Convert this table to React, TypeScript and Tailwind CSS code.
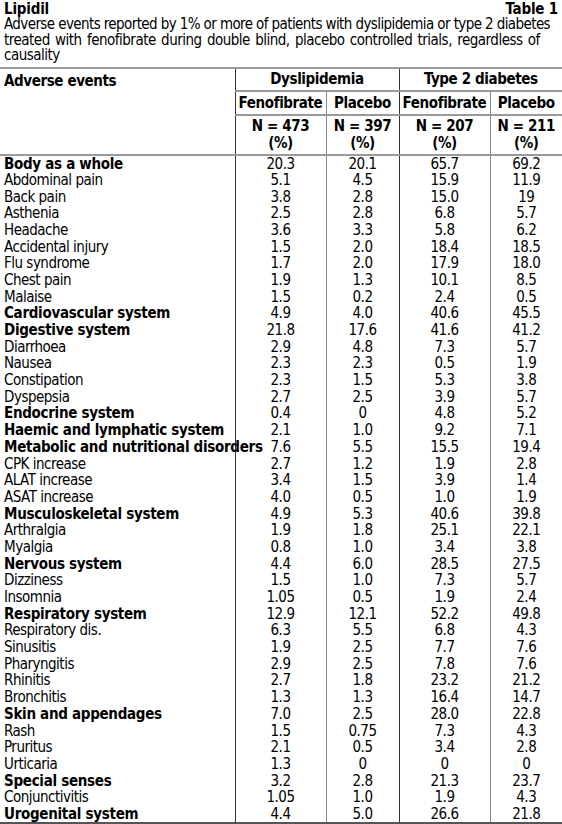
const rows: [string, string, string, string, string, boolean][] = [
  ["Body as a whole", "20.3", "20.1", "65.7", "69.2", true],
  ["Abdominal pain", "5.1", "4.5", "15.9", "11.9", false],
  ["Back pain", "3.8", "2.8", "15.0", "19", false],
  ["Asthenia", "2.5", "2.8", "6.8", "5.7", false],
  ["Headache", "3.6", "3.3", "5.8", "6.2", false],
  ["Accidental injury", "1.5", "2.0", "18.4", "18.5", false],
  ["Flu syndrome", "1.7", "2.0", "17.9", "18.0", false],
  ["Chest pain", "1.9", "1.3", "10.1", "8.5", false],
  ["Malaise", "1.5", "0.2", "2.4", "0.5", false],
  ["Cardiovascular system", "4.9", "4.0", "40.6", "45.5", true],
  ["Digestive system", "21.8", "17.6", "41.6", "41.2", true],
  ["Diarrhoea", "2.9", "4.8", "7.3", "5.7", false],
  ["Nausea", "2.3", "2.3", "0.5", "1.9", false],
  ["Constipation", "2.3", "1.5", "5.3", "3.8", false],
  ["Dyspepsia", "2.7", "2.5", "3.9", "5.7", false],
  ["Endocrine system", "0.4", "0", "4.8", "5.2", true],
  ["Haemic and lymphatic system", "2.1", "1.0", "9.2", "7.1", true],
  ["Metabolic and nutritional disorders", "7.6", "5.5", "15.5", "19.4", true],
  ["CPK increase", "2.7", "1.2", "1.9", "2.8", false],
  ["ALAT increase", "3.4", "1.5", "3.9", "1.4", false],
  ["ASAT increase", "4.0", "0.5", "1.0", "1.9", false],
  ["Musculoskeletal system", "4.9", "5.3", "40.6", "39.8", true],
  ["Arthralgia", "1.9", "1.8", "25.1", "22.1", false],
  ["Myalgia", "0.8", "1.0", "3.4", "3.8", false],
  ["Nervous system", "4.4", "6.0", "28.5", "27.5", true],
  ["Dizziness", "1.5", "1.0", "7.3", "5.7", false],
  ["Insomnia", "1.05", "0.5", "1.9", "2.4", false],
  ["Respiratory system", "12.9", "12.1", "52.2", "49.8", true],
  ["Respiratory dis.", "6.3", "5.5", "6.8", "4.3", false],
  ["Sinusitis", "1.9", "2.5", "7.7", "7.6", false],
  ["Pharyngitis", "2.9", "2.5", "7.8", "7.6", false],
  ["Rhinitis", "2.7", "1.8", "23.2", "21.2", false],
  ["Bronchitis", "1.3", "1.3", "16.4", "14.7", false],
  ["Skin and appendages", "7.0", "2.5", "28.0", "22.8", true],
  ["Rash", "1.5", "0.75", "7.3", "4.3", false],
  ["Pruritus", "2.1", "0.5", "3.4", "2.8", false],
  ["Urticaria", "1.3", "0", "0", "0", false],
  ["Special senses", "3.2", "2.8", "21.3", "23.7", true],
  ["Conjunctivitis", "1.05", "1.0", "1.9", "4.3", false],
  ["Urogenital system", "4.4", "5.0", "26.6", "21.8", true],
];

const font = {
  fontFamily: '"Liberation Sans Narrow", "DejaVu Sans Condensed", "Liberation Sans", sans-serif',
};

export default function App() {
  return (
    <div
      className="w-[562px] h-[824px] overflow-hidden bg-white text-black text-[15px] leading-[16px] tracking-[-0.5px]"
      style={font}
    >
      <div className="px-[4px] pt-[1px]">
        <div className="flex justify-between font-bold tracking-[-0.2px]">
          <span>Lipidil</span>
          <span>Table 1</span>
        </div>
        <p className="leading-[15.5px] whitespace-nowrap">
          <span className="tracking-[-0.6px]">
            Adverse events reported by 1% or more of patients with dyslipidemia or type 2 diabetes
          </span>
          <br />
          <span className="[word-spacing:1.5px]">
            treated with fenofibrate during double blind, placebo controlled trials, regardless of
          </span>
          <br />
          causality
        </p>
      </div>
      <table className="mt-[3px] w-[562px] table-fixed border-collapse">
        <colgroup>
          <col className="w-[235px]" />
          <col className="w-[91px]" />
          <col className="w-[73px]" />
          <col className="w-[91px]" />
          <col className="w-[72px]" />
        </colgroup>
        <thead className="font-bold tracking-[-0.4px]">
          <tr className="h-[23px] border-t-2 border-[#9a9a9a]">
            <th
              rowSpan={3}
              className="text-left align-top pl-[4px] pt-[4px] border-r border-r-[#333] border-b-2 border-b-[#9a9a9a]"
            >
              Adverse events
            </th>
            <th colSpan={2} className="text-center border-r border-r-[#333] border-b-2 border-b-[#9a9a9a]">
              Dyslipidemia
            </th>
            <th colSpan={2} className="text-center border-b-2 border-b-[#9a9a9a]">
              Type 2 diabetes
            </th>
          </tr>
          <tr className="h-[24px]">
            <th className="border-r border-r-[#888] border-b-2 border-b-[#9a9a9a]">Fenofibrate</th>
            <th className="border-r border-r-[#333] border-b-2 border-b-[#9a9a9a]">Placebo</th>
            <th className="border-r border-r-[#888] border-b-2 border-b-[#9a9a9a]">Fenofibrate</th>
            <th className="border-b-2 border-b-[#9a9a9a]">Placebo</th>
          </tr>
          <tr className="h-[40px]">
            <th className="border-r border-r-[#888] border-b-2 border-b-[#9a9a9a] leading-[17px]">
              N = 473
              <br />
              (%)
            </th>
            <th className="border-r border-r-[#333] border-b-2 border-b-[#9a9a9a] leading-[17px]">
              N = 397
              <br />
              (%)
            </th>
            <th className="border-r border-r-[#888] border-b-2 border-b-[#9a9a9a] leading-[17px]">
              N = 207
              <br />
              (%)
            </th>
            <th className="border-b-2 border-b-[#9a9a9a] leading-[17px]">
              N = 211
              <br />
              (%)
            </th>
          </tr>
        </thead>
        <tbody className="border-b-2 border-b-[#555]">
          {rows.map(([label, a, b, c, d, bold]) => (
            <tr key={label} className="h-[16.7px] leading-[16px]">
              <td
                className={`pl-[4px] border-r border-r-[#333] whitespace-nowrap ${
                  bold ? "font-bold tracking-[-0.3px]" : ""
                }`}
              >
                {label}
              </td>
              <td className="text-center border-r border-r-[#888]">{a}</td>
              <td className="text-center border-r border-r-[#333]">{b}</td>
              <td className="text-center border-r border-r-[#888]">{c}</td>
              <td className="text-center">{d}</td>
            </tr>
          ))}
        </tbody>
      </table>
    </div>
  );
}
